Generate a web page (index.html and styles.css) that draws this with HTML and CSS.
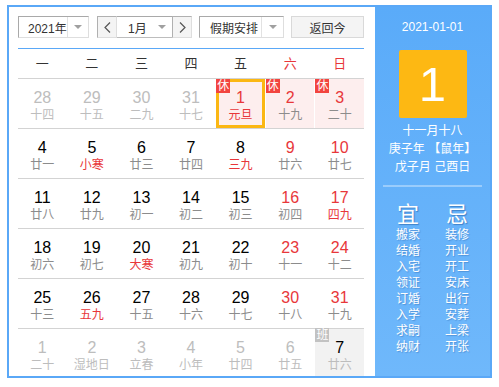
FILE: index.html
```html
<!DOCTYPE html>
<html lang="zh-CN">
<head>
    <meta charset="UTF-8">
    <title>万年历</title>
    <link rel="stylesheet" href="styles.css">
</head>
<body>
    <div class="calendar">
        <div class="cal-main">
            <div class="toolbar">
                <div class="select year-select">
                    <span class="select-text">2021年</span>
                    <span class="select-arrow"></span>
                </div>
                <div class="month-group">
                    <span class="nav-btn">
                        <svg width="7" height="11" viewBox="0 0 7 11"><polyline points="6,0.5 1,5.5 6,10.5" fill="none" stroke="#555" stroke-width="1.2"/></svg>
                    </span>
                    <div class="select month-select">
                        <span class="select-text">1月</span>
                        <span class="select-arrow no-line"></span>
                    </div>
                    <span class="nav-btn">
                        <svg width="7" height="11" viewBox="0 0 7 11"><polyline points="1,0.5 6,5.5 1,10.5" fill="none" stroke="#555" stroke-width="1.2"/></svg>
                    </span>
                </div>
                <div class="select holiday-select">
                    <span class="select-text">假期安排</span>
                    <span class="select-arrow"></span>
                </div>
                <button class="today-btn">返回今</button>
            </div>

            <div class="weekdays">
                <span>一</span><span>二</span><span>三</span><span>四</span><span>五</span><span class="red">六</span><span class="red">日</span>
            </div>

            <div class="weeks">
                <div class="week">
                    <div class="day other"><span class="num">28</span><span class="lunar">十四</span></div>
                    <div class="day other"><span class="num">29</span><span class="lunar">十五</span></div>
                    <div class="day other"><span class="num">30</span><span class="lunar">二九</span></div>
                    <div class="day other"><span class="num">31</span><span class="lunar">十七</span></div>
                    <div class="day rest selected"><span class="badge">休</span><span class="num red">1</span><span class="lunar red">元旦</span></div>
                    <div class="day rest"><span class="badge">休</span><span class="num red">2</span><span class="lunar">十九</span></div>
                    <div class="day rest"><span class="badge">休</span><span class="num red">3</span><span class="lunar">二十</span></div>
                </div>
                <div class="week">
                    <div class="day"><span class="num">4</span><span class="lunar">廿一</span></div>
                    <div class="day"><span class="num">5</span><span class="lunar red">小寒</span></div>
                    <div class="day"><span class="num">6</span><span class="lunar">廿三</span></div>
                    <div class="day"><span class="num">7</span><span class="lunar">廿四</span></div>
                    <div class="day"><span class="num">8</span><span class="lunar red">三九</span></div>
                    <div class="day"><span class="num red">9</span><span class="lunar">廿六</span></div>
                    <div class="day"><span class="num red">10</span><span class="lunar">廿七</span></div>
                </div>
                <div class="week">
                    <div class="day"><span class="num">11</span><span class="lunar">廿八</span></div>
                    <div class="day"><span class="num">12</span><span class="lunar">廿九</span></div>
                    <div class="day"><span class="num">13</span><span class="lunar">初一</span></div>
                    <div class="day"><span class="num">14</span><span class="lunar">初二</span></div>
                    <div class="day"><span class="num">15</span><span class="lunar">初三</span></div>
                    <div class="day"><span class="num red">16</span><span class="lunar">初四</span></div>
                    <div class="day"><span class="num red">17</span><span class="lunar red">四九</span></div>
                </div>
                <div class="week">
                    <div class="day"><span class="num">18</span><span class="lunar">初六</span></div>
                    <div class="day"><span class="num">19</span><span class="lunar">初七</span></div>
                    <div class="day"><span class="num">20</span><span class="lunar red">大寒</span></div>
                    <div class="day"><span class="num">21</span><span class="lunar">初九</span></div>
                    <div class="day"><span class="num">22</span><span class="lunar">初十</span></div>
                    <div class="day"><span class="num red">23</span><span class="lunar">十一</span></div>
                    <div class="day"><span class="num red">24</span><span class="lunar">十二</span></div>
                </div>
                <div class="week">
                    <div class="day"><span class="num">25</span><span class="lunar">十三</span></div>
                    <div class="day"><span class="num">26</span><span class="lunar red">五九</span></div>
                    <div class="day"><span class="num">27</span><span class="lunar">十五</span></div>
                    <div class="day"><span class="num">28</span><span class="lunar">十六</span></div>
                    <div class="day"><span class="num">29</span><span class="lunar">十七</span></div>
                    <div class="day"><span class="num red">30</span><span class="lunar">十八</span></div>
                    <div class="day"><span class="num red">31</span><span class="lunar">十九</span></div>
                </div>
                <div class="week">
                    <div class="day other"><span class="num">1</span><span class="lunar">二十</span></div>
                    <div class="day other"><span class="num">2</span><span class="lunar">湿地日</span></div>
                    <div class="day other"><span class="num">3</span><span class="lunar">立春</span></div>
                    <div class="day other"><span class="num">4</span><span class="lunar">小年</span></div>
                    <div class="day other"><span class="num">5</span><span class="lunar">廿四</span></div>
                    <div class="day other"><span class="num">6</span><span class="lunar">廿五</span></div>
                    <div class="day work"><span class="badge gray">班</span><span class="num">7</span><span class="lunar">廿六</span></div>
                </div>
            </div>
        </div>

        <div class="cal-side">
            <div class="side-date">2021-01-01</div>
            <div class="big-day">1</div>
            <div class="side-lunar">
                <div>十一月十八</div>
                <div>庚子年 【鼠年】</div>
                <div>戊子月 己酉日</div>
            </div>
            <div class="side-line"></div>
            <div class="yiji">
                <div class="yiji-col">
                    <div class="yiji-title">宜</div>
                    <div class="yiji-list">
                        <div>搬家</div><div>结婚</div><div>入宅</div><div>领证</div>
                        <div>订婚</div><div>入学</div><div>求嗣</div><div>纳财</div>
                    </div>
                </div>
                <div class="yiji-col">
                    <div class="yiji-title">忌</div>
                    <div class="yiji-list">
                        <div>装修</div><div>开业</div><div>开工</div><div>安床</div>
                        <div>出行</div><div>安葬</div><div>上梁</div><div>开张</div>
                    </div>
                </div>
            </div>
        </div>
    </div>
</body>
</html>
```

FILE: styles.css
```css
body {
    margin: 0;
    background: #fff;
    font-family: "Liberation Sans", Arial, "Noto Sans CJK SC", sans-serif;
    color: #333;
}
.calendar {
    display: flex;
    width: 485px;
    height: 373px;
    margin: 5px 0 0 7px;
    border: 2px solid #5aa8f7;
    box-sizing: border-box;
    overflow: hidden;
    background: #fff;
}
.cal-main {
    width: 366px;
    padding: 9px 11px 0 9px;
    box-sizing: border-box;
}

/* toolbar */
.toolbar {
    display: flex;
    height: 22px;
    margin-bottom: 10px;
}
.select {
    display: flex;
    align-items: center;
    height: 22px;
    box-sizing: border-box;
    border: 1px solid;
    border-color: #a9a9a9 #dedede #dedede #a9a9a9;
    background: #fff;
    font-size: 12px;
    color: #333;
}
.select-text {
    flex: 1;
    padding-left: 9px;
    white-space: nowrap;
}
.select-arrow {
    width: 20px;
    height: 100%;
    border-left: 1px solid #e2e2e2;
    display: flex;
    align-items: center;
    justify-content: center;
}
.select-arrow.no-line {
    border-left: none;
}
.select-arrow::after {
    content: "";
    border-left: 4px solid transparent;
    border-right: 4px solid transparent;
    border-top: 4px solid #a0a0a0;
}
.year-select {
    width: 71px;
}
.month-group {
    display: flex;
    width: 95px;
    margin-left: 8px;
}
.nav-btn {
    width: 20px;
    height: 22px;
    box-sizing: border-box;
    border: 1px solid;
    border-color: #b0b0b0 #dedede #dedede #b0b0b0;
    background: #f4f4f4;
    display: flex;
    align-items: center;
    justify-content: center;
}
.month-select {
    width: 55px;
    border-left: none;
    border-right: none;
    border-bottom-color: #bdbdbd;
}
.month-select .select-text {
    padding-left: 11px;
}
.holiday-select {
    width: 85px;
    margin-left: 7px;
}
.holiday-select .select-text {
    padding-left: 10px;
}
.holiday-select .select-arrow {
    width: 21px;
}
.today-btn {
    width: 73px;
    height: 22px;
    margin-left: 7px;
    padding: 0;
    border: 1px solid #d9d9d9;
    background: #f4f4f4;
    font-family: "Liberation Sans", Arial, "Noto Sans CJK SC", sans-serif;
    font-size: 12px;
    color: #333;
}

/* grid */
.weekdays {
    display: grid;
    grid-template-columns: repeat(7, 1fr);
    column-gap: 1px;
    height: 30px;
    box-sizing: border-box;
    border-top: 1px solid #5aa8f7;
    line-height: 29px;
    font-size: 13px;
    text-align: center;
    color: #333;
}
.red {
    color: #e8373a;
}
.week {
    display: grid;
    grid-template-columns: repeat(7, 1fr);
    column-gap: 1px;
    height: 50px;
    box-sizing: border-box;
    border-top: 1px solid #d3d3d3;
}
.day {
    position: relative;
    text-align: center;
    padding-top: 10px;
}
.num {
    display: block;
    font-size: 16px;
    line-height: 18px;
    color: #000;
}
.lunar {
    display: block;
    font-size: 12px;
    line-height: 16px;
    color: #8c8c8c;
    white-space: nowrap;
}
.num.red,
.lunar.red {
    color: #e8373a;
}
.other .num,
.other .lunar {
    color: #bdbdbd;
}
.rest {
    background: #fdeeee;
}
.selected {
    box-shadow: inset 0 0 0 3px #fbb713;
}
.work {
    background: #f2f2f2;
}
.work .lunar {
    color: #bdbdbd;
}
.badge {
    position: absolute;
    top: 0;
    left: 0;
    width: 14px;
    height: 14px;
    font-size: 12px;
    line-height: 14px;
    color: #fff;
    background: #f2443f;
    text-align: center;
}
.badge.gray {
    top: -1px;
    background: #c2c2c2;
}

/* side panel */
.cal-side {
    width: 115px;
    padding-top: 11px;
    box-sizing: border-box;
    background: linear-gradient(#5aabf9, #6fb8fb);
    color: #fff;
    text-align: center;
    display: flex;
    flex-direction: column;
    align-items: center;
}
.side-date {
    font-size: 12px;
    line-height: 18px;
}
.big-day {
    width: 68px;
    height: 68px;
    margin-top: 14px;
    border-radius: 2px;
    background: #fdb813;
    font-size: 49px;
    line-height: 68px;
    color: #fff;
}
.side-lunar {
    margin-top: 4px;
    font-size: 12px;
    line-height: 18px;
    white-space: nowrap;
}
.side-line {
    width: 99px;
    height: 2px;
    margin-top: 9px;
    background: rgba(255, 255, 255, 0.35);
}
.yiji {
    display: flex;
    margin-top: 12px;
}
.yiji-col {
    width: 49px;
}
.yiji-title {
    font-family: "Noto Sans CJK SC", sans-serif;
    font-size: 22px;
    line-height: 26px;
    text-shadow: 1px 1px 1px rgba(20, 70, 140, 0.45);
}
.yiji-list {
    margin-top: 2px;
    font-size: 12px;
    line-height: 16px;
    text-shadow: 1px 1px 1px rgba(20, 70, 140, 0.3);
}
```
